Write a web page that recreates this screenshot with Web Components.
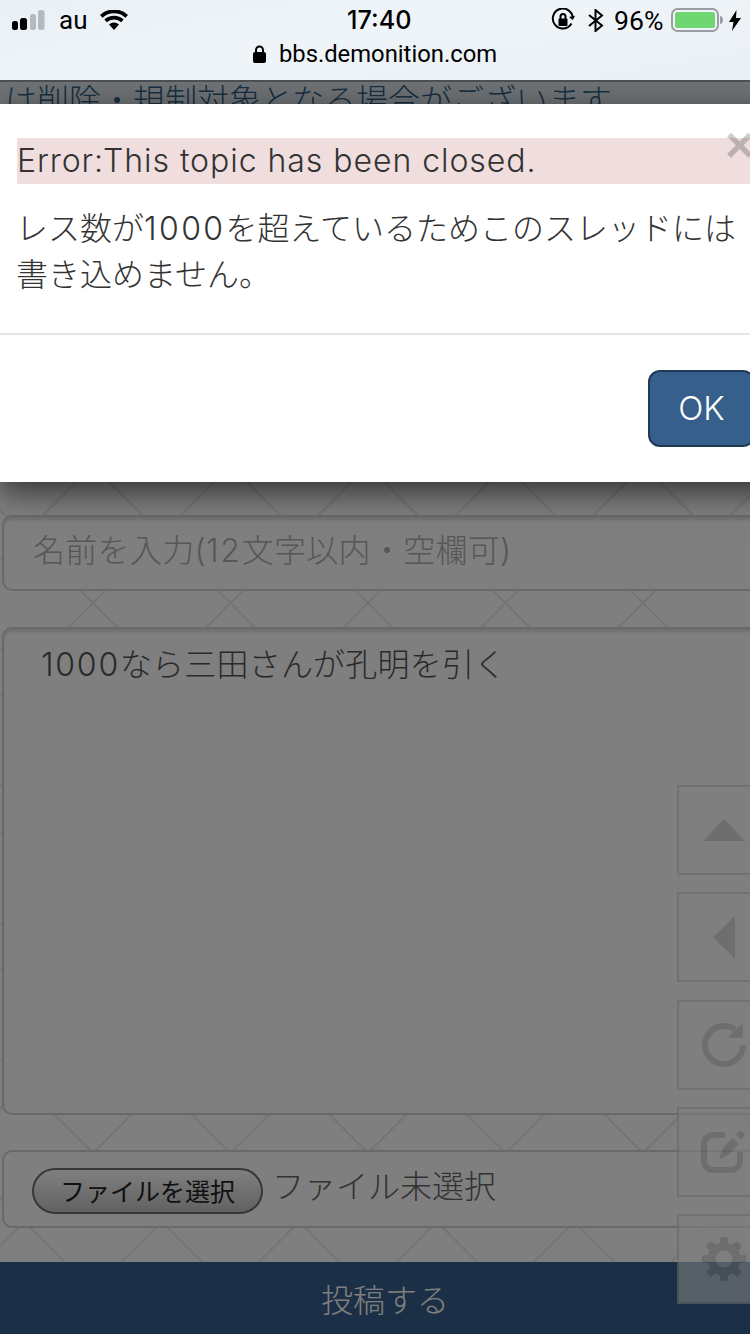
<!DOCTYPE html>
<html lang="ja">
<head>
<meta charset="utf-8">
<title>bbs.demonition.com</title>
<style>
  html,body{margin:0;padding:0;width:750px;height:1334px;overflow:hidden;background:#fff;}
  body{font-family:Inter,"Noto Sans CJK JP","Liberation Sans",sans-serif;}
  .num{letter-spacing:1.75px}
</style>
</head>
<body>
<template id="t-chrome">
  <style>
    :host{display:block;height:80px;width:750px;box-sizing:border-box;background:linear-gradient(170deg,#e9f1f6 0%,#eff4f8 45%,#e9f0f5 100%);color:#000;font-family:Inter,Roboto,"Liberation Sans",sans-serif;overflow:hidden}
    .row{display:flex;align-items:center;height:40px;font-size:26px}
    .left{display:flex;align-items:center;width:335px;padding-left:12px;box-sizing:border-box}
    .au{margin-left:14px;font-size:26px;font-family:Roboto,"Liberation Sans",sans-serif;width:41px}
    .time{width:216px;text-align:left;font-weight:500;font-size:25.2px;padding-left:12px;box-sizing:border-box}
    .right{display:flex;align-items:center}
    .pct{margin-left:10px;width:57px;font-size:26.6px;font-family:Roboto,"Liberation Sans",sans-serif}
    .url{display:flex;align-items:center;justify-content:center;gap:13px;height:28px;font-family:Roboto,"Liberation Sans",sans-serif;font-size:23.8px}
    svg{display:block;flex:none}
  </style>
  <div class="row">
    <div class="left">
      <svg width="33" height="20" viewBox="0 0 33 20"><rect x="0" y="11" width="6" height="9" rx="2.5"/><rect x="8" y="8" width="7" height="12" rx="2.5"/><rect x="18" y="4" width="6" height="16" rx="2.5" fill="#b4bbc0"/><rect x="26" y="0" width="6.5" height="20" rx="2.5" fill="#b4bbc0"/></svg>
      <span class="au"><slot name="carrier"></slot></span>
      <svg width="28" height="20" viewBox="0 0 28 20"><path d="M14 20 9 14.5a7.4 7.4 0 0 1 10 0zM6.8 12.2 4.4 9.6a14.2 14.2 0 0 1 19.2 0l-2.400 2.600a10.700 10.700 0 0 0-14.400 0zM2.600 7.700 0 4.900a20.600 20.600 0 0 1 28 0l-2.600 2.800a17 17 0 0 0-22.800 0z"/></svg>
    </div>
    <span class="time"><slot name="time"></slot></span>
    <div class="right">
      <svg width="24" height="24" viewBox="0 0 24 24" fill="none" stroke="#000" stroke-width="2"><path d="M20.500 15.500A10 10 0 1 1 21.800 10"/><path d="M18 9l3.800 3 2.200-4.300z" fill="#000" stroke="none"/><rect x="7.500" y="10.500" width="9" height="7.500" rx="1" fill="#000" stroke="none"/><path d="M9.500 11V8.500a2.500 2.500 0 0 1 5 0V11"/></svg>
      <svg style="margin-left:13px" width="16" height="23" viewBox="0 0 16 23" fill="none" stroke="#000" stroke-width="2"><path d="M1 6l13 10.500L7.500 22V1L14 6.500 1 17"/></svg>
      <span class="pct"><slot name="battery"></slot></span>
      <svg width="53" height="24" viewBox="0 0 53 24"><rect x="1" y="1" width="46" height="22" rx="5.500" fill="none" stroke="#9a9fa3" stroke-width="2"/><rect x="4" y="4" width="40" height="16" rx="2.500" fill="#6fd672"/><path d="M49 8c2 0 3 2 3 4s-1 4-3 4z" fill="#9a9fa3"/></svg>
      <svg style="margin-left:5px" width="12" height="21" viewBox="0 0 12 21"><path d="M7.500 0 0 12h4.500L3 21l9-13H7z"/></svg>
    </div>
  </div>
  <div class="url">
    <svg width="13" height="18" viewBox="0 0 13 18"><rect x="0" y="7" width="13" height="11" rx="2"/><path d="M3 8V5a3.500 3.500 0 0 1 7 0v3" fill="none" stroke="#000" stroke-width="2"/></svg>
    <span><slot name="url"></slot></span>
  </div>
</template>

<template id="t-page">
  <style>
    :host{display:flex;flex-direction:column;position:relative;width:770px;height:1254px;overflow:hidden;background-color:#fff;
      background-image:linear-gradient(45deg,transparent calc(50% - .8px),#e9e9e9 calc(50% - .8px),#e9e9e9 calc(50% + .8px),transparent calc(50% + .8px)),linear-gradient(-45deg,transparent calc(50% - .8px),#e9e9e9 calc(50% - .8px),#e9e9e9 calc(50% + .8px),transparent calc(50% + .8px));
      background-size:137.5px 137.5px;background-position:24.25px 454.25px}
    .form{flex:1;display:flex;flex-direction:column;gap:36px;padding:375px 0 0 2px;min-height:0}
  </style>
  <slot name="notice"></slot>
  <div class="form"><slot></slot></div>
  <slot name="footer"></slot>
  <slot name="rail"></slot>
  <slot name="overlay"></slot>
</template>

<template id="t-notice">
  <style>
    :host{display:block;height:60px;box-sizing:border-box;border-top:2px solid #9aa0a4;background:#dde5ea;color:#2f5f84;font-size:32px;line-height:38px;padding-left:5px;white-space:nowrap;overflow:hidden;font-weight:300}
  </style>
  <slot></slot>
</template>

<template id="t-field">
  <style>
    :host{display:flex;flex:none;box-sizing:border-box;border:2px solid #d2d2d2;border-radius:10px;background:#fff;box-shadow:inset 0 3px 3px rgba(0,0,0,.12);font-size:32px;line-height:40px;font-weight:300;height:var(--h,76px);padding:var(--pad,0 0 4px 29px);align-items:var(--align,center);color:var(--c,#aeaeae);letter-spacing:var(--ls,.3px);white-space:nowrap}
  </style>
  <span><slot></slot></span>
</template>

<template id="t-file">
  <style>
    :host{display:flex;flex:none;align-items:center;box-sizing:border-box;height:78px;margin-top:-1px;border:2px solid #d2d2d2;border-radius:10px;background:#fff;font-size:32px;line-height:40px;font-weight:300;color:#666;padding:0 0 4px 28px;gap:9px}
    .btn{display:flex;align-items:center;justify-content:center;box-sizing:border-box;width:231px;height:46px;border:2px solid #6e6e6e;border-radius:23px;background:linear-gradient(#fff,#c4c4c4);color:#222;font-size:25px;line-height:30px;font-weight:400;margin-top:8px;padding-top:2px}
  </style>
  <span class="btn"><slot name="button"></slot></span>
  <slot></slot>
</template>

<template id="t-footer">
  <style>
    :host{display:flex;align-items:center;justify-content:center;flex:none;height:72px;margin-top:34px;background:#365f8c;color:#fff;font-size:32px;font-weight:300}
  </style>
  <slot></slot>
</template>

<template id="t-rail">
  <style>
    :host{display:flex;flex-direction:column;gap:17.25px;position:absolute;left:677px;top:705px;width:93px}
  </style>
  <slot></slot>
</template>

<template id="t-railbtn">
  <style>
    :host{display:flex;align-items:center;justify-content:center;box-sizing:border-box;width:93px;height:90px;border:2px solid #cfcfcf;background:#fff;opacity:.6;color:#c5c5c5}
    ::slotted(svg){display:block}
  </style>
  <slot></slot>
</template>

<template id="t-backdrop">
  <style>
    :host{display:block;position:absolute;inset:0;background:rgba(0,0,0,.5)}
  </style>
  <slot></slot>
</template>

<template id="t-dialog">
  <style>
    :host{display:block;position:absolute;left:0;top:24px;width:785px;height:378px;box-sizing:border-box;background:#fff;box-shadow:0 10px 30px rgba(0,0,0,.6);color:#333;font-size:32px;line-height:46px;font-weight:300}
    .body{height:229px;box-sizing:border-box;padding:34px 0 0 17px;position:relative}
    .alert{display:block;background:#f0dede;height:46px;white-space:nowrap;letter-spacing:.95px}
    .msg{margin-top:22px;margin-left:-1px;width:735px;white-space:nowrap}
    .close{position:absolute;left:725px;top:18px;font:700 50px/46px "Liberation Sans",sans-serif;color:#000;opacity:.2}
    .foot{border-top:2px solid #e5e5e5;padding:35px 0 0 648px}
    .ok{display:flex;align-items:center;justify-content:center;box-sizing:border-box;width:107px;height:77px;border:2px solid #1f3a56;border-radius:12px;background:#365f8c;color:#fff;font-size:33px;padding-bottom:2px}
  </style>
  <div class="body">
    <span class="alert"><slot name="alert"></slot></span>
    <span class="close"><slot name="close"></slot></span>
    <div class="msg"><slot></slot></div>
  </div>
  <div class="foot"><span class="ok"><slot name="ok"></slot></span></div>
</template>

<ios-chrome>
  <span slot="carrier">au</span>
  <span slot="time">17:40</span>
  <span slot="battery">96%</span>
  <span slot="url">bbs.demonition.com</span>
</ios-chrome>

<forum-page>
  <forum-notice slot="notice">は削除・規制対象となる場合がございます</forum-notice>
  <text-field>名前を入力(<span class="num">12</span>文字以内・空欄可)</text-field>
  <text-field style="--h:488px;--pad:16px 0 0 37px;--align:flex-start;--c:#555;--ls:.2px"><span class="num">1000</span>なら三田さんが孔明を引く</text-field>
  <file-field><span slot="button">ファイルを選択</span>ファイル未選択</file-field>
  <forum-footer slot="footer">投稿する</forum-footer>
  <side-rail slot="rail">
    <rail-button><svg width="42" height="22" viewBox="0 0 42 22" fill="currentColor"><path d="M21 0 42 22H0z"/></svg></rail-button>
    <rail-button><svg width="22" height="43" viewBox="0 0 22 43" fill="currentColor"><path d="M22 0V43L0 21.500z"/></svg></rail-button>
    <rail-button><svg width="46" height="48" viewBox="-23 -24 46 48" fill="none" stroke="currentColor" stroke-width="6"><path d="M19 0A19 19 0 1 1 11-15.500"/><path d="M18.700-22.300V-7.300H3.700z" fill="currentColor" stroke="none"/></svg></rail-button>
    <rail-button><svg width="46" height="46" viewBox="0 -3 46 46" fill="none" stroke="currentColor" stroke-width="6"><path d="M24 3H12A9 9 0 0 0 3 12V29A9 9 0 0 0 12 38H30A9 9 0 0 0 39 29V20"/><path d="M18 27 22 16 32 6 38 12 28 22.500z" fill="currentColor" stroke="none"/><path d="M35 3 38-.5a2 2 0 0 1 3 0l2 2a2 2 0 0 1 0 3L40 8z" fill="currentColor" stroke="none"/></svg></rail-button>
    <rail-button><svg width="46" height="46" viewBox="0 0 46 46" fill="currentColor"><circle cx="23" cy="23" r="12.500" fill="none" stroke="currentColor" stroke-width="8"/><rect x="19" y="1" width="8" height="10" rx="2"/><rect x="19" y="1" width="8" height="10" rx="2" transform="rotate(45 23 23)"/><rect x="19" y="1" width="8" height="10" rx="2" transform="rotate(90 23 23)"/><rect x="19" y="1" width="8" height="10" rx="2" transform="rotate(135 23 23)"/><rect x="19" y="1" width="8" height="10" rx="2" transform="rotate(180 23 23)"/><rect x="19" y="1" width="8" height="10" rx="2" transform="rotate(225 23 23)"/><rect x="19" y="1" width="8" height="10" rx="2" transform="rotate(270 23 23)"/><rect x="19" y="1" width="8" height="10" rx="2" transform="rotate(315 23 23)"/></svg></rail-button>
  </side-rail>
  <modal-backdrop slot="overlay"></modal-backdrop>
  <alert-dialog slot="overlay">
    <span slot="alert">Error:This topic has been closed.</span>
    <span slot="close">×</span>
    レス数が<span class="num" style="letter-spacing:2.4px">1000</span>を超えているためこのスレッドには<br>書き込めません。
    <span slot="ok">OK</span>
  </alert-dialog>
</forum-page>

<script>
  const map = {
    'ios-chrome':'t-chrome','forum-page':'t-page','forum-notice':'t-notice','text-field':'t-field',
    'file-field':'t-file','forum-footer':'t-footer','side-rail':'t-rail','rail-button':'t-railbtn',
    'modal-backdrop':'t-backdrop','alert-dialog':'t-dialog'
  };
  for (const [name,id] of Object.entries(map)) {
    customElements.define(name, class extends HTMLElement {
      constructor(){
        super();
        this.attachShadow({mode:'open'}).appendChild(document.getElementById(id).content.cloneNode(true));
      }
    });
  }
</script>
</body>
</html>
